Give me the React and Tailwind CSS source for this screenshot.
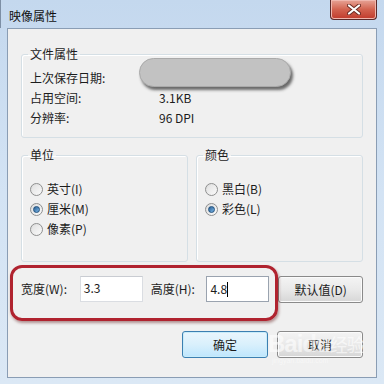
import React from "react";

function Radio({ checked, label }) {
  return (
    <div className="flex items-center h-[20px]">
      <span className="relative w-[13px] h-[13px] rounded-full border border-[#8e8f8f] bg-gradient-to-br from-[#d4d4d4] to-[#fbfbfb] flex items-center justify-center shadow-[inset_0_0_1px_#ffffff]">
        <span className="w-[9px] h-[9px] rounded-full bg-gradient-to-br from-[#e2e2e2] to-[#f8f8f8] flex items-center justify-center">
          {checked && (
            <span className="w-[7px] h-[7px] rounded-full border border-[#1f4f7c] bg-gradient-to-br from-[#2a5f93] to-[#7ab7e8]" />
          )}
        </span>
      </span>
      <span className="ml-[4px] leading-[20px]">{label}</span>
    </div>
  );
}

function Group({ title, children, className = "" }) {
  return (
    <fieldset className={"border border-[#d5dfe5] rounded-[3px] m-0 p-0 shadow-[inset_1px_1px_0_#ffffff] " + className}>
      <legend className="ml-[6px] px-[2px] leading-[14px]">{title}</legend>
      {children}
    </fieldset>
  );
}

function Button({ children, primary, className = "" }) {
  return (
    <div
      className={
        "h-[27px] rounded-[3px] border flex items-center justify-center " +
        (primary
          ? "border-[#3c7fb1] bg-gradient-to-b from-[#eaf6fd] via-[#d9f0fc] to-[#bee6fd] shadow-[inset_0_0_0_1px_#c8ecfa] "
          : "border-[#8a8a8a] bg-gradient-to-b from-[#f4f4f4] via-[#e9e9e9] to-[#d6d6d6] shadow-[inset_0_0_0_1px_#fbfbfb] ") +
        className
      }
    >
      <span className="leading-[14px]">{children}</span>
    </div>
  );
}

export default function App() {
  return (
    <div className="relative w-[384px] h-[384px] overflow-hidden bg-gradient-to-b from-[#c4d8ee] via-[#d3e3f4] to-[#dbe8f5] text-[12px] text-[#1c1c1c] font-['Noto_Sans_CJK_SC','Noto_Sans',sans-serif]">
      {/* title bar */}
      <div className="h-[28px] flex items-start justify-between pl-[8px] pr-[7px] border-l border-[#7d8fa5]">
        <span className="mt-[9px] leading-[14px] text-[#111]">映像属性</span>
        <div className="w-[47px] h-[20px] rounded-b-[4px] border border-t-0 border-[#5b2a2a] bg-gradient-to-b from-[#e6a396] via-[#d2624f] to-[#c0392b] flex items-center justify-center shadow-[inset_0_0_0_1px_#f0b7ae]">
          <svg width="14" height="11" viewBox="0 0 14 11">
            <path d="M2 1.5 L12 9.5 M12 1.5 L2 9.5" stroke="#6b2a22" strokeWidth="4" strokeLinecap="round" />
            <path d="M2 1.5 L12 9.5 M12 1.5 L2 9.5" stroke="#ffffff" strokeWidth="2.2" strokeLinecap="round" />
          </svg>
        </div>
      </div>

      {/* client area */}
      <div className="mx-[7px] h-[350px] border border-[#8a9db4] bg-[#f0f0f0] flex flex-col px-[13px] pt-[18px]">
        <Group title="文件属性">
          <div className="px-[8px] pt-[7px] pb-[9px]">
            <div className="flex h-[20px] leading-[20px]">
              <span className="w-[129px]">上次保存日期:</span>
              <span></span>
            </div>
            <div className="flex h-[20px] leading-[20px]">
              <span className="w-[129px]">占用空间:</span>
              <span>3.1KB</span>
            </div>
            <div className="flex h-[20px] leading-[20px]">
              <span className="w-[129px]">分辨率:</span>
              <span>96 DPI</span>
            </div>
          </div>
        </Group>

        <div className="mt-[10px] grid grid-cols-2 gap-[8px]">
          <Group title="单位">
            <div className="px-[8px] pt-[17px] pb-[22px]">
              <Radio label="英寸(I)" />
              <Radio label="厘米(M)" checked />
              <Radio label="像素(P)" />
            </div>
          </Group>
          <Group title="颜色">
            <div className="px-[8px] pt-[17px] pb-[22px]">
              <Radio label="黑白(B)" />
              <Radio label="彩色(L)" checked />
            </div>
          </Group>
        </div>

        <div className="mt-[14px] flex items-start">
          <span className="w-[59px] h-[26px] leading-[26px]">宽度(W):</span>
          <div className="w-[63px] h-[26px] bg-white border border-[#dadde2] border-t-[#c9ccd2] pl-[3px] leading-[22px]">3.3</div>
          <span className="ml-[8px] w-[56px] h-[26px] leading-[26px]">高度(H):</span>
          <div className="w-[63px] h-[26px] bg-white border border-[#9aa3af] pl-[3px] leading-[22px] flex items-center">
            <span>4.8</span>
            <span className="w-[1px] h-[15px] bg-black" />
          </div>
          <Button className="ml-[9px] w-[85px]">默认值(D)</Button>
        </div>

        <div className="mt-[28px] flex justify-end gap-[9px]">
          <Button primary className="w-[86px]">确定</Button>
          <Button className="w-[86px]">取消</Button>
        </div>
      </div>

      {/* redaction pill */}
      <div className="absolute left-[139px] top-[58px] w-[152px] h-[29px] rounded-full bg-[#c2c2c2] border border-[#aaaaaa] shadow-[2px_3px_3px_rgba(60,60,60,0.75)]" />

      {/* red annotation */}
      <div className="absolute left-[10px] top-[265px] w-[268px] h-[56px] rounded-[12px] border-[3px] border-[#b0232f] shadow-[1px_2px_3px_rgba(80,0,0,0.4)]" />

      {/* watermark */}
      <div className="absolute left-[268px] top-[330px] text-[24px] leading-[28px] font-bold text-white/60 font-['Liberation_Sans',sans-serif] tracking-[-1px]">
        Bai<span className="text-white/50">du</span><span className="text-[18px] font-normal font-['Noto_Sans_CJK_SC',sans-serif]">经验</span>
      </div>
      <div className="absolute left-[272px] top-[357px] text-[7px] leading-[8px] text-white/50 font-['Liberation_Sans',sans-serif]">
        jingyan.baidu.com
      </div>
    </div>
  );
}
